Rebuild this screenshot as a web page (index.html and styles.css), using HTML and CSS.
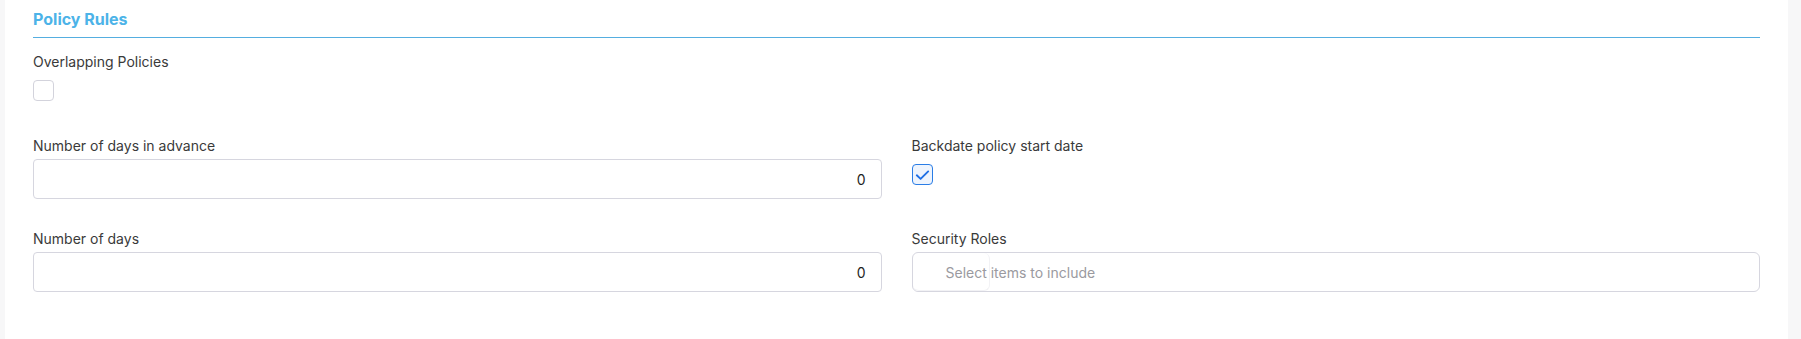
FILE: index.html
```html
<!DOCTYPE html>
<html lang="en">
<head>
<meta charset="utf-8">
<title>Policy Rules</title>
<link rel="stylesheet" href="styles.css">
</head>
<body>
<div class="page">
  <section class="card">
    <h2 class="section-title">Policy Rules</h2>
    <div class="form-grid">
      <div class="field">
        <label class="field-label">Overlapping Policies</label>
        <span class="checkbox"></span>
      </div>
      <div class="field"></div>

      <div class="field">
        <label class="field-label">Number of days in advance</label>
        <div class="input number-input">0</div>
      </div>
      <div class="field">
        <label class="field-label">Backdate policy start date</label>
        <span class="checkbox checked">
          <svg viewBox="0 0 20 20" width="20" height="20"><path d="M4 10.3l4 3.8L16 6.2" fill="none" stroke="#1f6fe5" stroke-width="2" stroke-linecap="round" stroke-linejoin="round"/></svg>
        </span>
      </div>

      <div class="field">
        <label class="field-label">Number of days</label>
        <div class="input number-input">0</div>
      </div>
      <div class="field">
        <label class="field-label">Security Roles</label>
        <div class="input select-input">
          <span class="tag-area"></span>
          <span class="placeholder">Select items to include</span>
        </div>
      </div>
    </div>
  </section>
</div>
</body>
</html>
```

FILE: styles.css
```css
* { box-sizing: border-box; }

html, body {
  margin: 0;
  padding: 0;
  height: 100%;
}

body {
  background: #f7f7f8;
  font-family: Inter, "Noto Sans", "Liberation Sans", sans-serif;
  color: #333;
}

.page {
  height: 100%;
  padding: 0 13px 0 5px;
}

.card {
  background: #fff;
  height: 100%;
  padding: 9px 28px 0 28px;
}

.section-title {
  margin: 0;
  font-size: 16px;
  line-height: 20px;
  font-weight: 700;
  color: #4cb3e8;
  padding-bottom: 8px;
  border-bottom: 1px solid #55aee0;
}

.form-grid {
  display: grid;
  grid-template-columns: 1fr 1fr;
  column-gap: 30px;
  row-gap: 30px;
  margin-top: 14px;
}

.field {
  display: flex;
  flex-direction: column;
  align-items: flex-start;
}

.field-label {
  font-size: 14px;
  line-height: 18px;
  color: #3a3a3a;
  margin-top: 1px;
  margin-bottom: 4px;
}

.checkbox {
  width: 21px;
  height: 21px;
  border: 1px solid #d3d3dc;
  border-radius: 4px;
  margin: 5px 0;
  background: #fff;
  display: flex;
  align-items: center;
  justify-content: center;
}

.checkbox.checked {
  border-color: #2a7de6;
  background: #eef4fd;
}

.input {
  width: 100%;
  height: 40px;
  border: 1px solid #d6d6df;
  border-radius: 4px;
  background: #fff;
  display: flex;
  align-items: center;
  font-size: 14px;
}

.number-input {
  justify-content: flex-end;
  padding-right: 15px;
  color: #1f1f1f;
}

.select-input {
  position: relative;
  border-radius: 6px;
  padding-left: 33px;
}

.tag-area {
  position: absolute;
  left: 0;
  top: 0;
  width: 77px;
  height: 38px;
  border: 1px solid #f2f2f5;
  border-left: none;
  border-top: none;
  border-radius: 6px;
}

.placeholder {
  position: relative;
  color: #9a9aa0;
  font-size: 14px;
}
```
